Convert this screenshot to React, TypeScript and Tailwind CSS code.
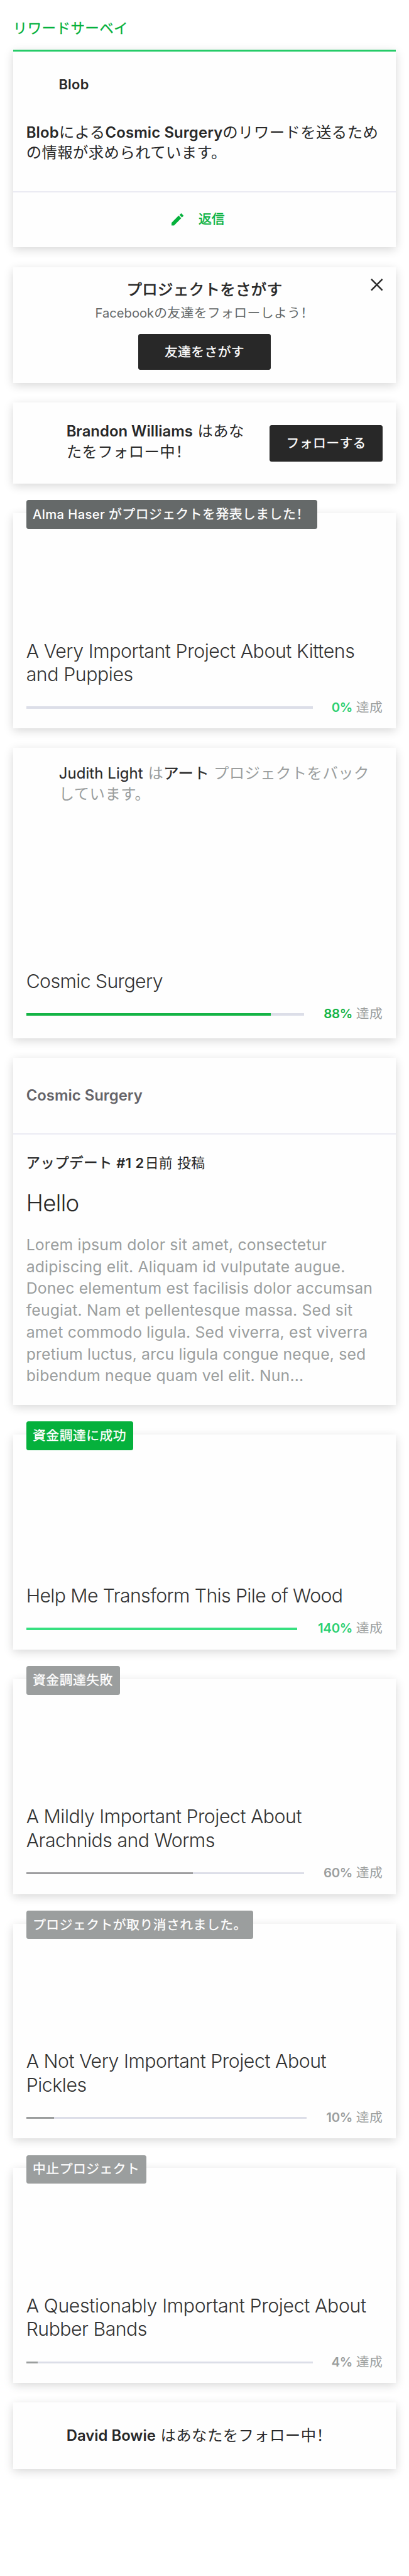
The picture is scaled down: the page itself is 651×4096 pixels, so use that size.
import type { ReactNode } from "react";
import clsx from "clsx";

/* Body-size Japanese run inside a Latin line. */
function Ja({ children, className }: { children: ReactNode; className?: string }) {
  return <span className={clsx("text-[24.4px] leading-none tracking-[0.4px]", className)}>{children}</span>;
}

/* Full-width exclamation mark, set at the left of its cell. */
function Bang() {
  return (
    <span lang="zh-CN" className="font-['Noto_Sans_CJK_SC',sans-serif] leading-none">
      ！
    </span>
  );
}

function Card({ children, className }: { children?: ReactNode; className?: string }) {
  return (
    <section
      className={clsx(
        "relative mx-[20.83px] flex flex-col bg-[#fefefe] shadow-[0_3.5px_15px_rgba(0,0,0,0.165)]",
        className,
      )}
    >
      {children}
    </section>
  );
}

function DarkButton({ children, className }: { children: ReactNode; className?: string }) {
  return (
    <button
      className={clsx(
        "flex h-[57.3px] shrink-0 items-center justify-center rounded-[3.5px] bg-[#282828] text-[20.8px] leading-6 tracking-[0.4px] whitespace-nowrap text-white [-webkit-text-stroke:0.3px_currentColor]",
        className,
      )}
    >
      {children}
    </button>
  );
}

type ProgressProps = {
  percent: number;
  barWidth: string;
  fill: string;
  label: string;
};

function Progress({ percent, barWidth, fill, label }: ProgressProps) {
  return (
    <div className="mt-[20.75px] flex h-6 items-center justify-between">
      <div className={clsx("mt-[1.3px] h-[3.5px] bg-[#dcdee8]", barWidth)}>
        <div className={clsx("h-full", fill)} style={{ width: `${Math.min(percent, 100)}%` }} />
      </div>
      <div className="text-[20.4px] leading-6 whitespace-nowrap text-[#9b9e9e]">
        <span className={clsx("font-semibold tracking-[-0.3px]", label)}>{percent}%</span>{" "}
        <span className="text-[20.8px] leading-none tracking-[0.5px]">達成</span>
      </div>
    </div>
  );
}

type ProjectProps = ProgressProps & {
  badge: ReactNode;
  badgeClass: string;
  lines: { text: string; tracking: string }[];
};

function ProjectCard({ badge, badgeClass, lines, ...progress }: ProjectProps) {
  return (
    <Card className="mt-[46.86px] h-[341.91px] justify-end px-[20.83px] pb-[21.65px]">
      <div
        className={clsx(
          "absolute -top-[20.8px] left-[20.83px] flex h-[45.7px] items-center rounded-[3.5px] px-[10.4px] text-[20.2px] leading-6 whitespace-nowrap text-white",
          badgeClass,
        )}
      >
        <span>{badge}</span>
      </div>
      <Title lines={lines} />
      <Progress {...progress} />
    </Card>
  );
}

function Title({ lines }: { lines: { text: string; tracking: string }[] }) {
  return (
    <h2 className="text-[30.25px] leading-[37.55px] font-light whitespace-nowrap text-[#333333]">
      {lines.map((l) => (
        <span key={l.text} className={clsx("block", l.tracking)}>
          {l.text}
        </span>
      ))}
    </h2>
  );
}

function BadgeJa({ children }: { children: ReactNode }) {
  return (
    <span className="text-[20.8px] leading-none tracking-[0.5px] [-webkit-text-stroke:0.3px_currentColor]">
      {children}
    </span>
  );
}

const lorem = [
  "Lorem ipsum dolor sit amet, consectetur",
  "adipiscing elit. Aliquam id vulputate augue.",
  "Donec elementum est facilisis dolor accumsan",
  "feugiat. Nam et pellentesque massa. Sed sit",
  "amet commodo ligula. Sed viverra, est viverra",
  "pretium luctus, arcu ligula congue neque, sed",
  "bibendum neque quam vel elit. Nun...",
];

export default function App() {
  return (
    <main
      lang="ja"
      className="flex h-[4096px] w-[651px] flex-col overflow-hidden bg-white font-['Inter','Noto_Sans_CJK_JP',sans-serif] text-[#282828]"
    >
      <h1 className="mt-[30.9px] mb-[20.36px] ml-[20.83px] h-7 text-[22.56px] leading-7 tracking-[0.35px] text-[#05b13c] [-webkit-text-stroke:0.3px_currentColor]">
        リワードサーベイ
      </h1>

      <Card className="h-[314.14px] shrink-0 border-t-[3.5px] border-[#25cb68]">
        <div className="mt-[37.8px] pl-[72.6px] text-[21.9px] leading-7 font-semibold tracking-[0.25px]">Blob</div>
        <p className="mt-[46.8px] pl-[20.83px] text-[23.9px] leading-[32.5px] whitespace-nowrap">
          <b className="font-semibold tracking-[0.2px]">Blob</b>
          <Ja>による</Ja>
          <b className="font-semibold tracking-[0.12px]">Cosmic Surgery</b>
          <Ja>のリワードを送るため</Ja>
          <br />
          <Ja>の情報が求められています。</Ja>
        </p>
        <div className="mt-[44.5px] h-[1.74px] bg-[#ebebf3]" />
        <button className="flex flex-1 items-center justify-center gap-6 pr-[20.6px] pb-px text-[20.8px] leading-6 text-[#05b13c] [-webkit-text-stroke:0.4px_currentColor]">
          <svg viewBox="0 0 100 101" className="h-[19.5px] w-[19.3px] fill-current">
            <path d="M0 79 59 20 80 41 21 101H0Z" />
            <path d="M66 14 80 0 100 21 86 35Z" />
          </svg>
          返信
        </button>
      </Card>

      <Card className="mt-[31.24px] h-[184.55px] items-center">
        <button className="absolute top-[18.4px] right-[21px]" aria-label="close">
          <svg viewBox="0 0 20 20" className="size-[19.6px]" stroke="#282828" strokeWidth="2.5" fill="none">
            <path d="M1 1 19 19M19 1 1 19" />
          </svg>
        </button>
        <h2 className="mt-[19px] text-[24.4px] leading-8 tracking-[0.4px] [-webkit-text-stroke:0.65px_currentColor]">
          プロジェクトをさがす
        </h2>
        <p className="mt-2 text-[20.2px] leading-7 whitespace-nowrap text-[#656969]">
          Facebook
          <span className="text-[20.8px] leading-none tracking-[0.4px]">
            の友達をフォローしよう
            <Bang />
          </span>
        </p>
        <DarkButton className="mt-[19.4px] w-[211.8px]">友達をさがす</DarkButton>
      </Card>

      <Card className="mt-[31.24px] h-[129.01px]">
        <div className="flex flex-1 items-center justify-between pr-[20.7px] pl-[84.8px]">
          <p className="-mt-[4.6px] text-[23.9px] leading-[32.5px] whitespace-nowrap">
            <b className="mr-px font-semibold">Brandon Williams</b> <Ja>はあな</Ja>
            <br />
            <Ja>
              たをフォロー中
              <Bang />
            </Ja>
          </p>
          <DarkButton className="w-[180.6px]">フォローする</DarkButton>
        </div>
      </Card>

      <ProjectCard
        badge={
          <>
            <span className="font-medium tracking-[0.4px]">Alma Haser </span>
            <BadgeJa>
              がプロジェクトを発表しました
              <Bang />
            </BadgeJa>
          </>
        }
        badgeClass="bg-[#656969] w-[463.8px]"
        lines={[
          { text: "A Very Important Project About Kittens", tracking: "tracking-[-0.41px]" },
          { text: "and Puppies", tracking: "tracking-[-0.4px]" },
        ]}
        percent={0}
        barWidth="w-[456.3px]"
        fill="bg-[#37e080]"
        label="text-[#2bd070]"
      />

      <Card className="mt-[31.24px] h-[461.67px] px-[20.83px] pb-[26.9px]">
        <p className="mt-[23.7px] pl-[52.1px] text-[23.9px] leading-[33.2px] whitespace-nowrap text-[#9b9e9e]">
          <span className="mr-px tracking-[0.1px] text-[#282828] [-webkit-text-stroke:0.15px_currentColor]">
            Judith Light
          </span>{" "}
          <Ja>は</Ja>
          <Ja className="text-[#282828] [-webkit-text-stroke:0.3px_currentColor]">アート</Ja>{" "}
          <Ja className="tracking-[0.3px]">プロジェクトをバック</Ja>
          <br />
          <Ja>しています。</Ja>
        </p>
        <div className="flex-1" />
        <Title lines={[{ text: "Cosmic Surgery", tracking: "tracking-[-0.6px]" }]} />
        <Progress percent={88} barWidth="w-[442.2px]" fill="bg-[#14b445]" label="text-[#14b445]" />
      </Card>

      <Card className="mt-[31.24px] h-[551.92px]">
        <div className="flex h-[120px] items-center pb-[1.4px] pl-[20.83px] text-[23.9px] leading-8 font-semibold text-[#656469]">
          Cosmic Surgery
        </div>
        <div className="h-[1.74px] bg-[#ebebf3]" />
        <div className="px-[20.83px]">
          <p className="mt-[31.1px] text-[21.9px] leading-7 whitespace-nowrap">
            <span className="text-[22.2px] leading-none tracking-[0.7px] [-webkit-text-stroke:0.5px_currentColor]">
              アップデート
            </span>{" "}
            <b className="font-semibold tracking-[0.5px]">#1 2</b>
            <span className="ml-px tracking-[0.2px]">日前</span> <span className="ml-px tracking-[0.4px]">投稿</span>
          </p>
          <h2 className="mt-[27.9px] text-[36.6px] leading-[44px] font-light tracking-[-0.6px]">Hello</h2>
          <p className="mt-[27px] text-[24.8px] leading-[34.71px] tracking-[0.16px] whitespace-nowrap text-[#9b9e9e]">
            {lorem.map((l) => (
              <span key={l} className="block">
                {l}
              </span>
            ))}
          </p>
        </div>
      </Card>

      <ProjectCard
        badge={<BadgeJa>資金調達に成功</BadgeJa>}
        badgeClass="bg-[#05b13c] w-[170.2px]"
        lines={[{ text: "Help Me Transform This Pile of Wood", tracking: "tracking-[-0.61px]" }]}
        percent={140}
        barWidth="w-[431.8px]"
        fill="bg-[#37e080]"
        label="text-[#2bd070]"
      />
      <ProjectCard
        badge={<BadgeJa>資金調達失敗</BadgeJa>}
        badgeClass="bg-[#9b9e9e] w-[149px]"
        lines={[
          { text: "A Mildly Important Project About", tracking: "tracking-[-0.48px]" },
          { text: "Arachnids and Worms", tracking: "tracking-[-0.5px]" },
        ]}
        percent={60}
        barWidth="w-[442.2px]"
        fill="bg-[#9e9ea0]"
        label="text-[#9b9e9e]"
      />
      <ProjectCard
        badge={<BadgeJa>プロジェクトが取り消されました。</BadgeJa>}
        badgeClass="bg-[#9b9e9e] w-[361.6px]"
        lines={[
          { text: "A Not Very Important Project About", tracking: "tracking-[-0.46px]" },
          { text: "Pickles", tracking: "tracking-[-0.45px]" },
        ]}
        percent={10}
        barWidth="w-[445.9px]"
        fill="bg-[#9b9e9e]"
        label="text-[#9b9e9e]"
      />
      <ProjectCard
        badge={<BadgeJa>中止プロジェクト</BadgeJa>}
        badgeClass="bg-[#9b9e9e] w-[191.8px]"
        lines={[
          { text: "A Questionably Important Project About", tracking: "tracking-[-0.36px]" },
          { text: "Rubber Bands", tracking: "tracking-[-0.5px]" },
        ]}
        percent={4}
        barWidth="w-[456.7px]"
        fill="bg-[#9b9e9e]"
        label="text-[#9b9e9e]"
      />

      <Card className="mt-[31.24px] h-[105.87px] justify-center pl-[84.8px]">
        <p className="text-[23.9px] leading-8 whitespace-nowrap">
          <b className="mr-px font-semibold">David Bowie</b>{" "}
          <Ja>
            はあなたをフォロー中
            <Bang />
          </Ja>
        </p>
      </Card>
    </main>
  );
}
